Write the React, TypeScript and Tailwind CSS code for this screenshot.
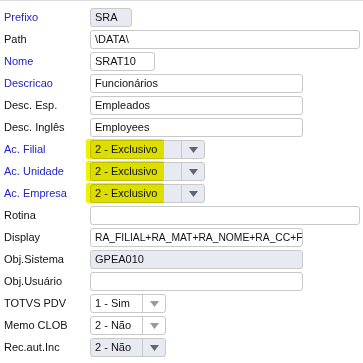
import React from "react";

type Row = {
  label: string;
  blue?: boolean;
  kind: "input" | "select";
  value: string;
  width: string;
  disabled?: boolean;
  mark?: boolean;
  tight?: boolean;
};

const rows: Row[] = [
  { label: "Prefixo", blue: true, kind: "input", value: "SRA", width: "w-[42px]", disabled: true },
  { label: "Path", kind: "input", value: "\\DATA\\", width: "w-[270px]" },
  { label: "Nome", blue: true, kind: "input", value: "SRAT10", width: "w-[65px]" },
  { label: "Descricao", blue: true, kind: "input", value: "Funcionários", width: "w-[213px]" },
  { label: "Desc. Esp.", kind: "input", value: "Empleados", width: "w-[213px]" },
  { label: "Desc. Inglês", kind: "input", value: "Employees", width: "w-[213px]" },
  { label: "Ac. Filial", blue: true, kind: "select", value: "2 - Exclusivo", width: "w-[115px]", disabled: true, mark: true },
  { label: "Ac. Unidade", blue: true, kind: "select", value: "2 - Exclusivo", width: "w-[115px]", disabled: true, mark: true },
  { label: "Ac. Empresa", blue: true, kind: "select", value: "2 - Exclusivo", width: "w-[115px]", disabled: true, mark: true },
  { label: "Rotina", kind: "input", value: "", width: "w-[270px]" },
  { label: "Display", kind: "input", value: "RA_FILIAL+RA_MAT+RA_NOME+RA_CC+F", width: "w-[213px]", tight: true },
  { label: "Obj.Sistema", kind: "input", value: "GPEA010", width: "w-[213px]", disabled: true },
  { label: "Obj.Usuário", kind: "input", value: "", width: "w-[213px]" },
  { label: "TOTVS PDV", kind: "select", value: "1 - Sim", width: "w-[76px]" },
  { label: "Memo CLOB", kind: "select", value: "2 - Não", width: "w-[76px]" },
  { label: "Rec.aut.Inc", kind: "select", value: "2 - Não", width: "w-[76px]", disabled: true },
];

function Arrow({ dark }: { dark?: boolean }) {
  return (
    <svg width="9" height="6" viewBox="0 0 9 6">
      <path d="M0 0 H9 L4.5 6 Z" fill={dark ? "#5f6673" : "#9a9a9a"} />
    </svg>
  );
}

function Field({ row }: { row: Row }) {
  const bg = row.disabled ? "bg-[#e8eaf1]" : "bg-white";
  if (row.kind === "input") {
    return (
      <div
        className={`${row.width} h-[19px] ${bg} border border-[#c9c9c9] rounded-[3px] px-[4px] flex items-center overflow-hidden whitespace-nowrap`}
      >
        <span className={row.tight ? "text-[10.3px]" : ""}>{row.value}</span>
      </div>
    );
  }
  return (
    <div className={`relative ${row.width} h-[19px] ${bg} border border-[#c9c9c9] rounded-[3px] flex items-stretch`}>
      <div className="flex-1 flex items-center px-[4px] whitespace-nowrap overflow-hidden">{row.value}</div>
      <div className="w-[23px] border-l border-[#c9c9c9] flex items-center justify-center">
        <Arrow dark={row.disabled} />
      </div>
      {row.mark && (
        <div className="absolute left-[-5px] top-[-2px] w-[78px] h-[20px] bg-[#f2f200] mix-blend-multiply rounded-[2px]" />
      )}
    </div>
  );
}

export default function App() {
  return (
    <div
      className="w-[363px] h-[363px] bg-white text-[11px] text-[#111] overflow-hidden"
      style={{ fontFamily: "'Liberation Sans', Arial, sans-serif" }}
    >
      <div className="h-px bg-[#dcdcdc]" />
      <div className="flex flex-col gap-[3px] pt-[7px]">
        {rows.map((row) => (
          <div key={row.label} className="flex items-center h-[19px]">
            <div className={`w-[90px] pl-[4px] ${row.blue ? "text-[#2323c8]" : "text-[#111]"}`}>{row.label}</div>
            <Field row={row} />
          </div>
        ))}
      </div>
    </div>
  );
}
